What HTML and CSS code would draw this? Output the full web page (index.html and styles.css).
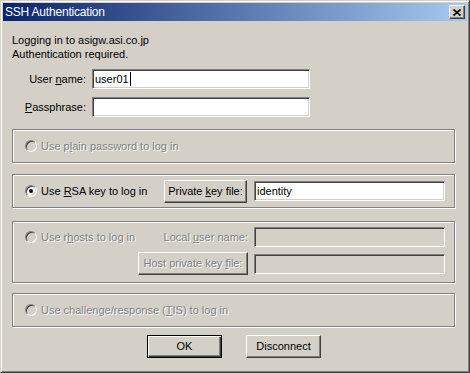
FILE: index.html
```html
<!DOCTYPE html>
<html lang="en">
<head>
    <meta charset="UTF-8">
    <title>SSH Authentication</title>
    <link rel="stylesheet" href="styles.css">
</head>
<body>
    <div class="window">
        <div class="titlebar">
            <span class="title">SSH Authentication</span>
            <span class="close-btn">
                <svg width="8" height="7" viewBox="0 0 8 7">
                    <path d="M0.5 0.5 L7.5 6.5 M7.5 0.5 L0.5 6.5" stroke="#000" stroke-width="1.6" fill="none"/>
                </svg>
            </span>
        </div>
        <div class="dialog">
            <div class="message">Logging in to asigw.asi.co.jp<br>Authentication required.</div>

            <div class="fields">
                <label class="field-label">User <u>n</u>ame:</label>
                <div class="textbox"><span>user01</span><span class="caret"></span></div>
                <label class="field-label"><u>P</u>assphrase:</label>
                <div class="textbox"></div>
            </div>

            <div class="group group-single">
                <div class="option disabled"><span class="radio"></span><span>Use p<u>l</u>ain password to log in</span></div>
            </div>

            <div class="group group-single">
                <div class="option"><span class="radio checked"></span><span>Use <u>R</u>SA key to log in</span></div>
                <span class="btn btn-key">Private <u>k</u>ey file:</span>
                <div class="textbox textbox-file"><span>identity</span></div>
            </div>

            <div class="group group-rhosts">
                <div class="option disabled"><span class="radio"></span><span>Use r<u>h</u>osts to log in</span></div>
                <span class="side-label disabled">Local <u>u</u>ser name:</span>
                <div class="textbox textbox-file textbox-disabled"></div>
                <span></span>
                <span class="btn btn-host disabled">Host private key <u>f</u>ile:</span>
                <div class="textbox textbox-file textbox-disabled"></div>
            </div>

            <div class="group group-single group-last">
                <div class="option disabled"><span class="radio"></span><span>Use challenge/response (<u>T</u>IS) to log in</span></div>
            </div>

            <div class="actions">
                <span class="btn btn-action btn-default">OK</span>
                <span class="btn btn-action">Disconnect</span>
            </div>
        </div>
    </div>
</body>
</html>
```

FILE: styles.css
```css
body {
    margin: 0;
    padding: 0;
    font-family: "Liberation Sans", Arial, sans-serif;
    font-size: 11px;
    color: #000;
}
.window {
    width: 470px;
    height: 373px;
    box-sizing: border-box;
    background-color: #d4d0c8;
    border: 1px solid;
    border-color: #d4d0c8 #404040 #404040 #d4d0c8;
    box-shadow: inset 1px 1px 0 #fff, inset -1px -1px 0 #808080;
    padding: 2px;
}
.titlebar {
    height: 18px;
    background: linear-gradient(to right, #0a246a, #a6caf0);
    display: flex;
    align-items: center;
    justify-content: space-between;
    padding: 0 2px 0 2px;
}
.title {
    color: #fff;
    font-size: 12px;
    letter-spacing: -0.2px;
}
.close-btn {
    width: 16px;
    height: 14px;
    box-sizing: border-box;
    background-color: #d4d0c8;
    border: 1px solid;
    border-color: #fff #404040 #404040 #fff;
    box-shadow: inset -1px -1px 0 #808080;
    display: flex;
    align-items: center;
    justify-content: center;
}
.dialog {
    padding: 0 11px 0 9px;
}
.message {
    margin-top: 12px;
    line-height: 14px;
}
.fields {
    display: grid;
    grid-template-columns: 74px 218px;
    column-gap: 6px;
    row-gap: 8px;
    align-items: center;
    margin-top: 8px;
}
.field-label {
    text-align: right;
}
.textbox {
    height: 20px;
    box-sizing: border-box;
    background-color: #fff;
    border: 1px solid;
    border-color: #808080 #fff #fff #808080;
    box-shadow: inset 1px 1px 0 #404040, inset -1px -1px 0 #d4d0c8;
    padding: 0 2px;
    display: flex;
    align-items: center;
}
.textbox-file {
    width: 191px;
    flex-shrink: 0;
}
.textbox-disabled {
    background-color: #d4d0c8;
}
.caret {
    width: 1px;
    height: 14px;
    background-color: #000;
    margin-left: 1px;
}
.group {
    box-sizing: border-box;
    width: 443px;
    border: 1px solid #808080;
    box-shadow: 1px 1px 0 #fff, inset 1px 1px 0 #fff;
    padding: 0 9px 0 12px;
}
.group-single {
    height: 34px;
    margin-top: 11px;
    display: flex;
    align-items: center;
    gap: 7px;
}
.fields + .group {
    margin-top: 12px;
}
.group-rhosts {
    margin-top: 13px;
    height: 62px;
    display: grid;
    grid-template-columns: minmax(0, 1fr) auto 191px;
    grid-template-rows: 20px 23px;
    column-gap: 6px;
    row-gap: 5px;
    align-items: center;
    padding-top: 5px;
}
.group-last {
    margin-top: 10px;
}
.side-label {
    text-align: right;
}
.option {
    flex: 1;
    display: flex;
    align-items: center;
    white-space: nowrap;
}
.radio {
    width: 12px;
    height: 12px;
    flex-shrink: 0;
    box-sizing: border-box;
    border-radius: 50%;
    border: 1px solid;
    border-color: #808080 #fff #fff #808080;
    box-shadow: inset 1px 1px 0 #404040, inset -1px -1px 0 #d4d0c8;
    background-color: #fff;
    margin-right: 4px;
    display: flex;
    align-items: center;
    justify-content: center;
}
.radio.checked::after {
    content: "";
    width: 4px;
    height: 4px;
    border-radius: 50%;
    background-color: #000;
}
.disabled {
    color: #808080;
    text-shadow: 1px 1px 0 #fff;
}
.disabled .radio {
    background-color: #d4d0c8;
}
.btn {
    box-sizing: border-box;
    height: 23px;
    line-height: 21px;
    display: block;
    text-align: center;
    white-space: nowrap;
    background-color: #d4d0c8;
    border: 1px solid;
    border-color: #fff #404040 #404040 #fff;
    box-shadow: inset -1px -1px 0 #808080;
}
.btn-key {
    width: 83px;
    flex-shrink: 0;
}
.btn-host {
    width: 110px;
    justify-self: end;
}
.actions {
    display: flex;
    justify-content: center;
    gap: 24px;
    margin-top: 8px;
}
.btn-action {
    width: 75px;
}
.btn-default {
    border-color: #000;
    box-shadow: inset 1px 1px 0 #fff, inset -1px -1px 0 #404040, inset -2px -2px 0 #808080;
}
```
